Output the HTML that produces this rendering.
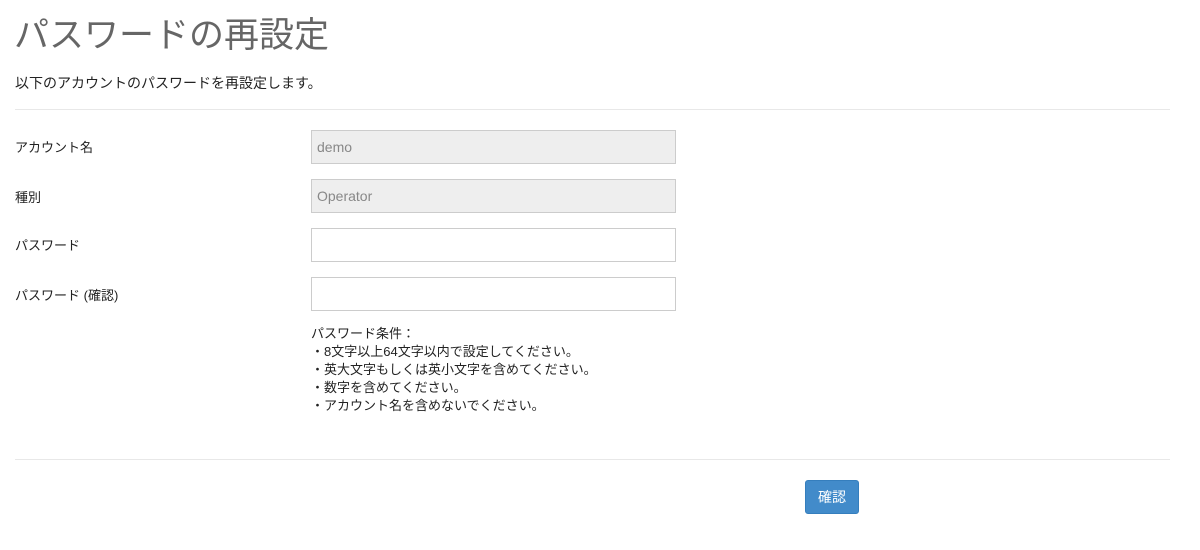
<!DOCTYPE html>
<html><head><meta charset="utf-8"><style>
body{margin:0;background:#fff;font-family:"Liberation Sans","Noto Sans CJK JP",sans-serif;color:#222;font-size:13px;}
.a{position:absolute;white-space:nowrap;}
h1{position:absolute;left:14px;top:14px;margin:0;font-weight:normal;font-size:35px;line-height:44px;color:#666;}
.hr{position:absolute;left:15px;width:1155px;height:1px;background:#e8e8e8;}
.in{position:absolute;left:311px;width:363px;height:32px;border:1px solid #ccc;background:#fff;box-sizing:content-box;font-size:14px;color:#888;line-height:32px;text-indent:5px;}
.ro{background:#eee;}
.btn{position:absolute;left:805px;top:480px;width:54px;height:34px;background:#428bca;border:1px solid #357ebd;box-sizing:border-box;border-radius:3px;color:#fff;font-size:14px;text-align:center;line-height:32px;}
.cond{position:absolute;left:311px;top:325px;line-height:18px;font-size:13px;}
</style></head><body>
<h1>パスワードの再設定</h1>
<div class="a" style="left:15px;top:73px;font-size:14px;">以下のアカウントのパスワードを再設定します。</div>
<div class="hr" style="top:109px"></div>
<div class="a" style="left:15px;top:137px;">アカウント名</div>
<div class="a" style="left:15px;top:187px;">種別</div>
<div class="a" style="left:15px;top:235px;">パスワード</div>
<div class="a" style="left:15px;top:285px;">パスワード (確認)</div>
<div class="in ro" style="top:130px">demo</div>
<div class="in ro" style="top:179px">Operator</div>
<div class="in" style="top:228px"></div>
<div class="in" style="top:277px"></div>
<div class="cond">パスワード条件：<br>・8文字以上64文字以内で設定してください。<br>・英大文字もしくは英小文字を含めてください。<br>・数字を含めてください。<br>・アカウント名を含めないでください。</div>
<div class="hr" style="top:459px"></div>
<div class="btn">確認</div>
</body></html>
